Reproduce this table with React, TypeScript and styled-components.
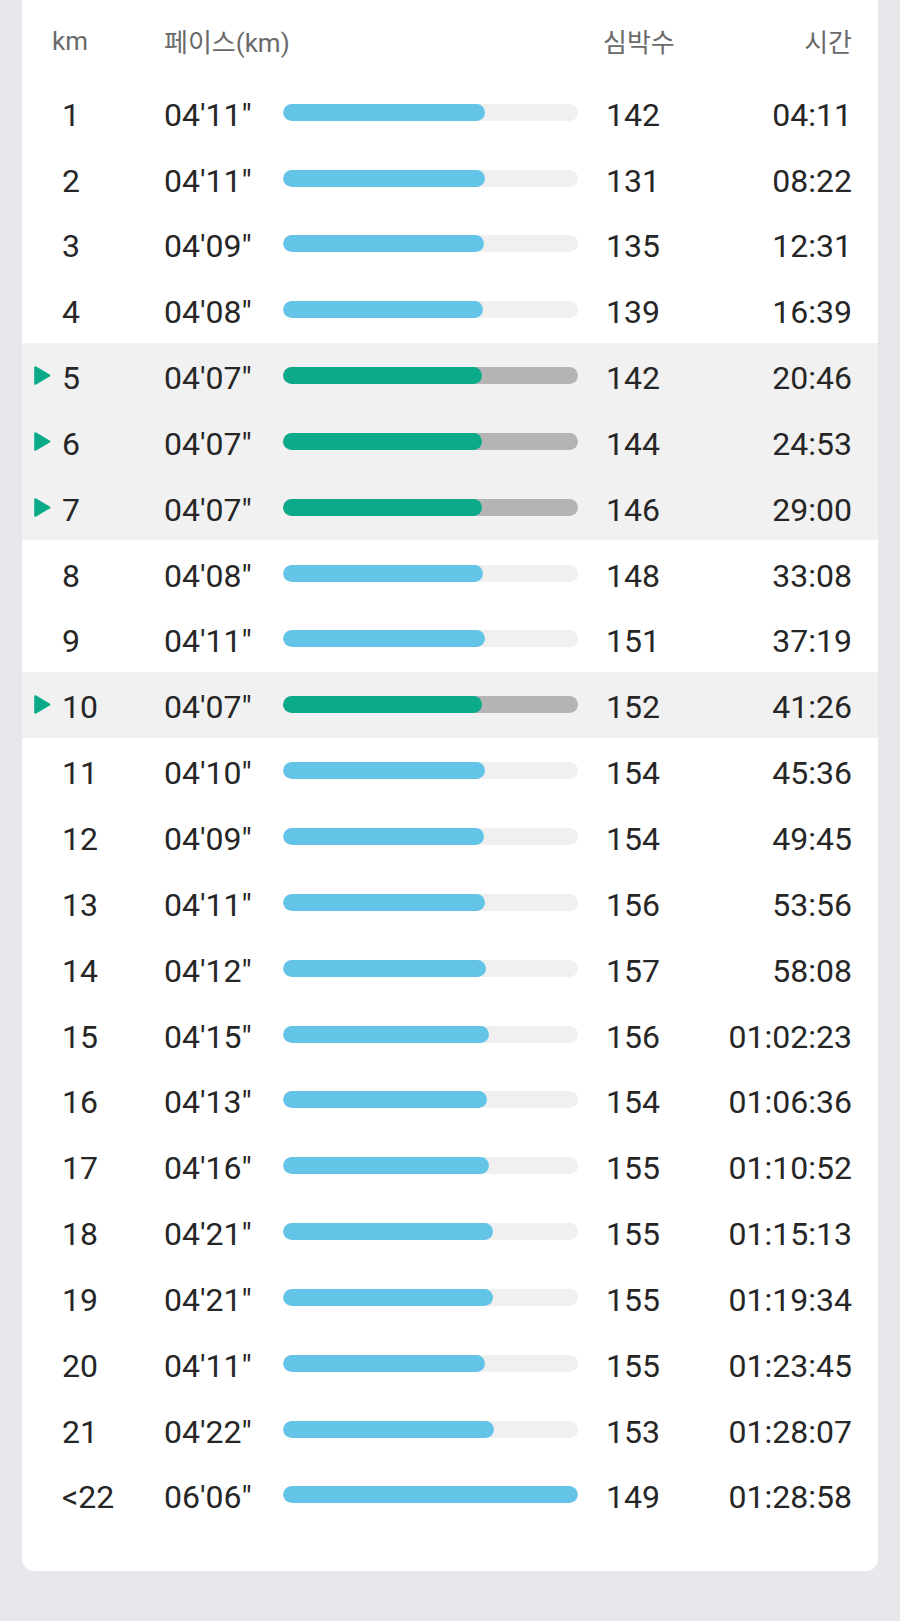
import React from "react";
import styled, { createGlobalStyle } from "styled-components";

const GlobalStyle = createGlobalStyle`
  html, body {
    margin: 0;
    padding: 0;
    background: #e7e8ec;
  }
  body {
    font-family: Roboto, "Noto Sans CJK KR", "Noto Sans", sans-serif;
    -webkit-font-smoothing: antialiased;
  }
`;

const Page = styled.div`
  min-height: 1621px;
  background: #e7e8ec;
  padding: 0 22px;
  box-sizing: border-box;
`;

const Card = styled.div`
  background: #ffffff;
  border-radius: 0 0 12px 12px;
  padding-bottom: 43px;
`;

const Grid = styled.div`
  display: grid;
  grid-template-columns: 40px 102px 119px 295px 121px 1fr;
  align-items: center;
  padding-right: 26px;
`;

const HeaderRow = styled(Grid)`
  height: 79.3px;
  box-sizing: border-box;
  padding-top: 2px;
  color: #6a6a6a;
  font-size: 26px;
  font-family: Roboto, "Noto Sans CJK KR", sans-serif;
`;

const HeadKm = styled.div`
  grid-column: 1 / 3;
  padding-left: 30px;
`;

const HeadCell = styled.div<{ $align?: "left" | "right"; $pad?: number }>`
  text-align: ${(p) => p.$align ?? "left"};
  padding-left: ${(p) => p.$pad ?? 0}px;
  white-space: nowrap;
`;

const Row = styled(Grid)<{ $active: boolean }>`
  height: 65.85px;
  background: ${(p) => (p.$active ? "#f1f1f1" : "transparent")};
  color: #262626;
  font-size: 32px;
`;

const Marker = styled.div`
  display: flex;
  align-items: center;
  padding-left: 11px;
  height: 100%;
`;

const Cell = styled.div<{ $align?: "left" | "right"; $pad?: number }>`
  text-align: ${(p) => p.$align ?? "left"};
  padding-left: ${(p) => p.$pad ?? 0}px;
  padding-top: 5px;
  white-space: nowrap;
  line-height: 1;
`;

const Track = styled.div<{ $active: boolean }>`
  height: 17px;
  border-radius: 9px;
  background: ${(p) => (p.$active ? "#b4b4b4" : "#f0f0f0")};
  overflow: hidden;
`;

const Fill = styled.div<{ $active: boolean }>`
  height: 100%;
  border-radius: 9px;
  background: ${(p) => (p.$active ? "#0baa89" : "#63c4e8")};
`;

type Split = { km: string; pace: string; hr: number; time: string; active?: boolean };

const splits: Split[] = [
  { km: "1", pace: "04'11\"", hr: 142, time: "04:11" },
  { km: "2", pace: "04'11\"", hr: 131, time: "08:22" },
  { km: "3", pace: "04'09\"", hr: 135, time: "12:31" },
  { km: "4", pace: "04'08\"", hr: 139, time: "16:39" },
  { km: "5", pace: "04'07\"", hr: 142, time: "20:46", active: true },
  { km: "6", pace: "04'07\"", hr: 144, time: "24:53", active: true },
  { km: "7", pace: "04'07\"", hr: 146, time: "29:00", active: true },
  { km: "8", pace: "04'08\"", hr: 148, time: "33:08" },
  { km: "9", pace: "04'11\"", hr: 151, time: "37:19" },
  { km: "10", pace: "04'07\"", hr: 152, time: "41:26", active: true },
  { km: "11", pace: "04'10\"", hr: 154, time: "45:36" },
  { km: "12", pace: "04'09\"", hr: 154, time: "49:45" },
  { km: "13", pace: "04'11\"", hr: 156, time: "53:56" },
  { km: "14", pace: "04'12\"", hr: 157, time: "58:08" },
  { km: "15", pace: "04'15\"", hr: 156, time: "01:02:23" },
  { km: "16", pace: "04'13\"", hr: 154, time: "01:06:36" },
  { km: "17", pace: "04'16\"", hr: 155, time: "01:10:52" },
  { km: "18", pace: "04'21\"", hr: 155, time: "01:15:13" },
  { km: "19", pace: "04'21\"", hr: 155, time: "01:19:34" },
  { km: "20", pace: "04'11\"", hr: 155, time: "01:23:45" },
  { km: "21", pace: "04'22\"", hr: 153, time: "01:28:07" },
  { km: "<22", pace: "06'06\"", hr: 149, time: "01:28:58" },
];

const paceSeconds = (p: string) => {
  const m = p.match(/(\d+)'(\d+)/);
  return m ? parseInt(m[1], 10) * 60 + parseInt(m[2], 10) : 0;
};

const maxPace = Math.max(...splits.map((s) => paceSeconds(s.pace)));

const PlayMark = () => (
  <svg width="18" height="21" viewBox="0 0 18 21">
    <path d="M2.5 2.5 L16 10.5 L2.5 18.5 Z" fill="#0baa89" stroke="#0baa89" strokeWidth="2.6" strokeLinejoin="round" />
  </svg>
);

export default function App() {
  return (
    <>
      <GlobalStyle />
      <Page>
        <Card>
          <HeaderRow>
            <HeadKm>km</HeadKm>
            <HeadCell>페이스(km)</HeadCell>
            <div />
            <HeadCell $pad={25}>심박수</HeadCell>
            <HeadCell $align="right">시간</HeadCell>
          </HeaderRow>
          {splits.map((s) => {
            const active = !!s.active;
            const pct = (paceSeconds(s.pace) / maxPace) * 100;
            return (
              <Row key={s.km} $active={active}>
                <Marker>{active && <PlayMark />}</Marker>
                <Cell>{s.km}</Cell>
                <Cell>{s.pace}</Cell>
                <Track $active={active}>
                  <Fill $active={active} style={{ width: `${pct}%` }} />
                </Track>
                <Cell $pad={28}>{s.hr}</Cell>
                <Cell $align="right">{s.time}</Cell>
              </Row>
            );
          })}
        </Card>
      </Page>
    </>
  );
}
